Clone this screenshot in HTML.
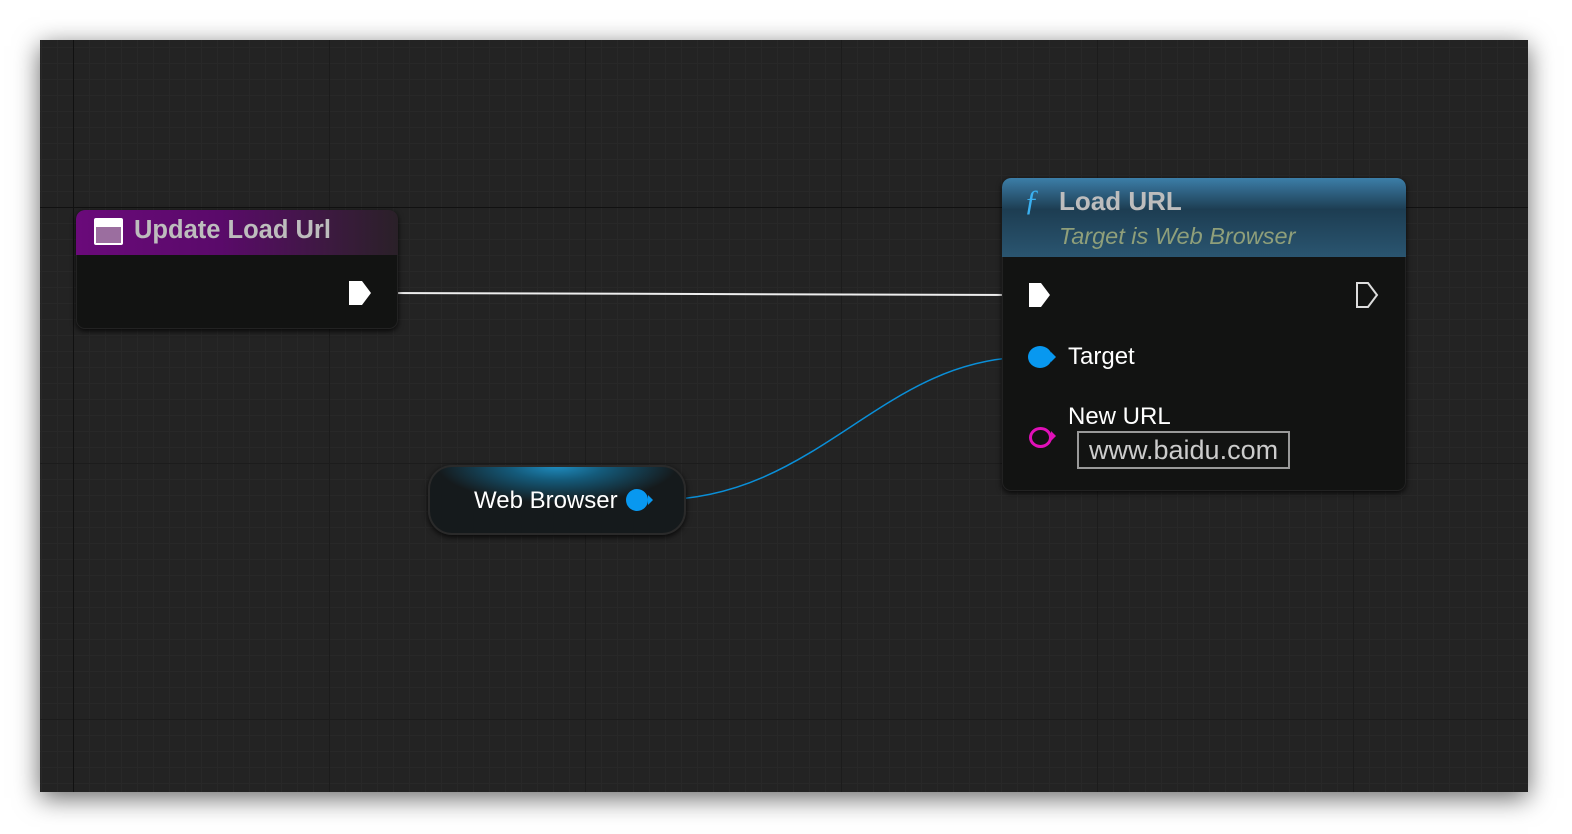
<!DOCTYPE html>
<html><head><meta charset="utf-8"><style>
body{margin:0;width:1572px;height:834px;background:#fff;position:relative;overflow:hidden;font-family:"Liberation Sans",sans-serif}
#c{position:absolute;left:40px;top:40px;width:1488px;height:752px;background-color:#232323;
box-shadow:0 6px 24px rgba(0,0,0,.6);
background-image:
linear-gradient(90deg,#111 0,#111 1px,transparent 1px),
linear-gradient(180deg,#111 0,#111 1px,transparent 1px),
linear-gradient(90deg,#1c1c1c 0,#1c1c1c 1px,transparent 1px),
linear-gradient(180deg,#1c1c1c 0,#1c1c1c 1px,transparent 1px),
linear-gradient(90deg,#282828 0,#282828 1px,transparent 1px),
linear-gradient(180deg,#282828 0,#282828 1px,transparent 1px);
background-size:2000px 2000px,2000px 2000px,256px 256px,256px 256px,16px 16px,16px 16px;
background-position:33px 0,0 167px,33px 0,0 167px,1px 0,0 7px;background-repeat:no-repeat,no-repeat,repeat,repeat,repeat,repeat}
.node{position:absolute;background:#121312;border-radius:9px;box-shadow:0 2px 6px rgba(0,0,0,.8),inset 0 0 0 1px #222}
.t{position:absolute;font-weight:bold;color:#bdbdbd;font-size:26px}
.w{position:absolute;color:#fff;font-size:23px}
</style></head><body>
<div id="c"></div>
<svg width="1572" height="834" style="position:absolute;left:0;top:0">
<line x1="372" y1="293" x2="1028" y2="295" stroke="#eee" stroke-width="2"/>
<path d="M655 500 C 820 500, 880 357, 1030 357" stroke="#0a8fd8" stroke-width="1.5" fill="none"/>
</svg>
<div class="node" style="left:76px;top:210px;width:322px;height:119px;overflow:hidden">
<div style="height:45px;background:linear-gradient(90deg,#6a0a7a 0%,#5a0a6a 45%,#3b1a3e 80%,#2a2028 100%);border-radius:9px 9px 0 0"></div>
<div style="position:absolute;left:18px;top:8px;width:29px;height:27px;background:#fff;border-radius:2px"><div style="position:absolute;left:2px;top:9px;width:25px;height:16px;background:#9b6e9f"></div></div>
<div class="t" style="left:58px;top:6px;font-size:25.5px">Update Load Url</div>
</div>
<div class="node" style="left:1002px;top:178px;width:404px;height:313px;overflow:hidden">
<div style="height:79px;background:linear-gradient(180deg,#3c7ea8 0%,#1d3d52 40%,#2a5570 100%);border-radius:9px 9px 0 0"></div>
<div style="position:absolute;left:22px;top:6px;color:#3ab0f0;font-size:30px;font-style:italic;font-family:'Liberation Serif',serif">ƒ</div>
<div class="t" style="left:57px;top:8px">Load URL</div>
<div style="position:absolute;left:57px;top:45px;color:#8f9f7a;font-style:italic;font-size:23.5px">Target is Web Browser</div>
<div style="position:absolute;left:26px;top:168px;width:24px;height:22px;border-radius:50%;background:#0898f0"></div>
<div style="position:absolute;left:49px;top:174px;border-left:5px solid #0898f0;border-top:5px solid transparent;border-bottom:5px solid transparent"></div>
<div class="w" style="left:66px;top:165px;font-size:24px">Target</div>
<div class="w" style="left:66px;top:225px;font-size:24px">New URL</div>
<div style="position:absolute;left:27px;top:249px;width:17px;height:15px;border-radius:50%;border:3px solid #e010b8"></div>
<div style="position:absolute;left:49px;top:253px;border-left:5px solid #e010b8;border-top:5px solid transparent;border-bottom:5px solid transparent"></div>
<div style="position:absolute;left:75px;top:253px;width:213px;height:38px;border:2px solid #999;box-sizing:border-box;color:#ccc;font-size:27px;line-height:34px;padding-left:10px">www.baidu.com</div>
</div>
<div style="position:absolute;left:428px;top:465px;width:258px;height:70px;border-radius:24px;background:radial-gradient(ellipse 120px 38px at 50% 0%,#1f8fc4 0%,#145a7a 40%,#151a1c 100%);box-shadow:0 2px 6px rgba(0,0,0,.8),inset 0 0 0 2px #2a2a2a"></div>
<div class="w" style="left:474px;top:487px;font-size:24px">Web Browser</div>
<div style="position:absolute;left:626px;top:489px;width:22px;height:22px;border-radius:50%;background:#0898f0"></div>
<div style="position:absolute;left:648px;top:495px;border-left:5px solid #0898f0;border-top:5px solid transparent;border-bottom:5px solid transparent"></div>
<svg width="1572" height="834" style="position:absolute;left:0;top:0">
<path d="M349 281 h13 l9 12 l-9 12 h-13 z" fill="#fff"/>
<path d="M1029 283 h12 l9 12 l-9 12 h-12 z" fill="#fff"/>
<path d="M1357 283 h11 l9 12 l-9 12 h-11 z" fill="none" stroke="#ddd" stroke-width="2"/>
</svg>
</body></html>
